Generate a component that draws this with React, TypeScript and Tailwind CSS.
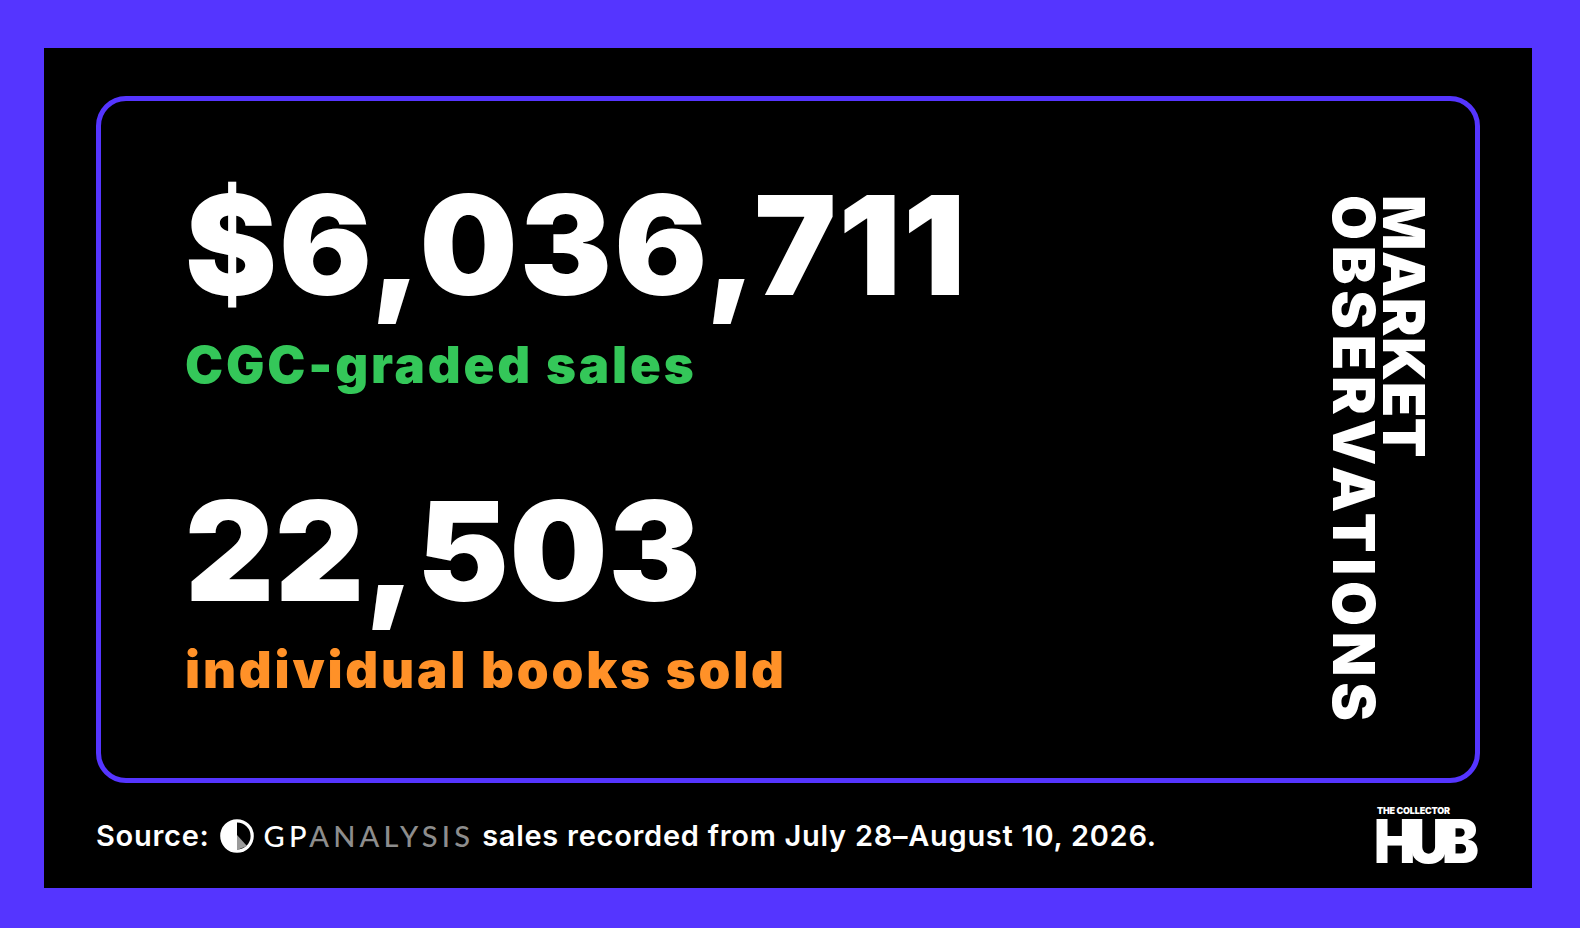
import React from "react";

const heavy = { fontFamily: "Inter, 'Liberation Sans', sans-serif" };

function GpMark() {
  return (
    <svg width="34" height="34" viewBox="0 0 34 34" className="shrink-0">
      <circle cx="17" cy="17" r="15.2" fill="#000" stroke="#fff" strokeWidth="3.2" />
      <path d="M17 1.8 A15.2 15.2 0 0 0 17 32.2 Z" fill="#fff" />
      <path d="M17 16 L17 31 L27 27 Z" fill="#9a9a9a" />
    </svg>
  );
}

function HubLogo() {
  return (
    <div className="w-[103px] flex flex-col items-start text-white" style={heavy}>
      <span className="text-[9px] leading-[9px] font-black tracking-[-0.02em]">THE COLLECTOR</span>
      <span className="mt-[3px] -ml-[3px] inline-block origin-left scale-x-[0.92] text-[60px] leading-[47px] font-black tracking-[-0.12em]">
        HUB
      </span>
    </div>
  );
}

export default function App() {
  return (
    <div className="w-[1580px] h-[928px] bg-[#5535ff] pt-[48px] pl-[44px] pr-[48px] pb-[40px]">
      <div className="h-full bg-black px-[52px] pt-[48px] flex flex-col">
        <div className="h-[687px] shrink-0 rounded-[30px] border-[5px] border-[#5535ff] flex justify-between pl-[84px] pt-[75px] pr-[46px]" style={heavy}>
          <div className="flex flex-col">
            <div className="text-[138px] leading-none font-black text-white tracking-[0.015em]">$6,036,711</div>
            <div className="mt-[25px] text-[51px] leading-none font-black text-[#34c759] tracking-[0.055em]">CGC-graded sales</div>
            <div className="mt-[92px] text-[138px] leading-none font-black text-white tracking-[0.005em]">22,503</div>
            <div className="mt-[24px] text-[51px] leading-none font-black text-[#ff9128] tracking-[0.055em]">individual books sold</div>
          </div>
          <div className="mt-[19px] h-fit text-[58px] leading-[50px] font-black text-white [writing-mode:vertical-rl]">
            <span className="tracking-[0.01em]">MARKET</span>
            <br />
            <span className="tracking-[0.1em]">OBSERVATIONS</span>
          </div>
        </div>
        <div className="flex-1 flex items-center justify-between">
          <div className="flex items-center text-white text-[29px] font-semibold tracking-[0.025em]" style={heavy}>
            <span>Source:</span>
            <span className="ml-[10px]"><GpMark /></span>
            <span className="ml-[10px] font-medium tracking-[0.145em]" style={{ fontFamily: "Lato, 'Noto Sans', sans-serif" }}>
              GP<span className="text-[#8d8d8d]">ANALYSIS</span>
            </span>
            <span className="ml-[8px]">sales recorded from July 28–August 10, 2026.</span>
          </div>
          <HubLogo />
        </div>
      </div>
    </div>
  );
}
